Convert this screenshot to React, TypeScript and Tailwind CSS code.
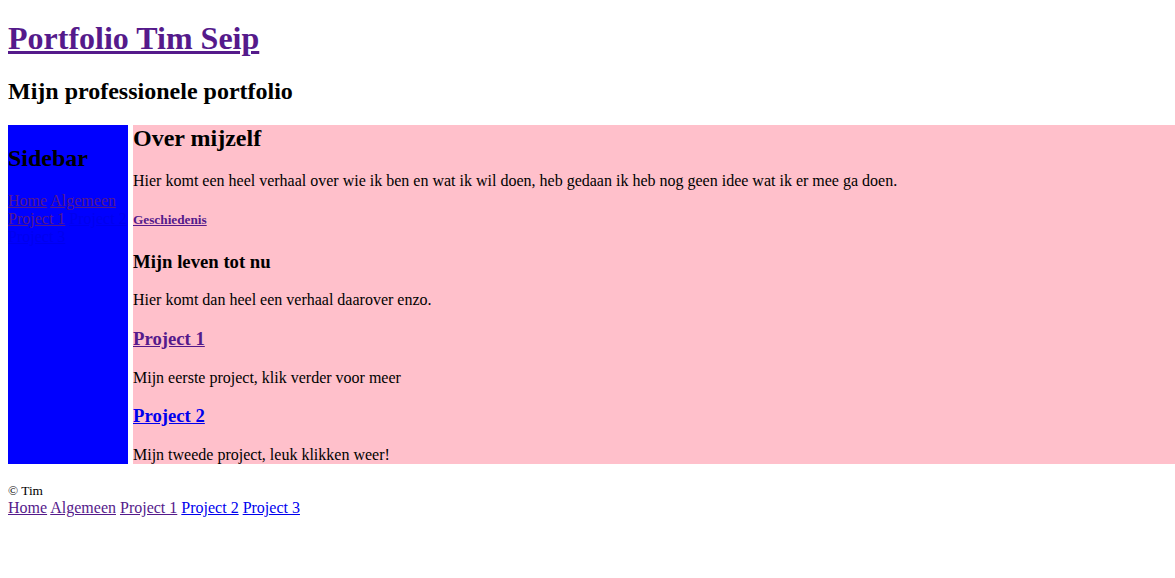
export default function App() {
  const visited = "text-[#551a8b] underline";
  const fresh = "text-[#0000ee] underline";

  return (
    <div className="font-['Liberation_Serif',serif] text-black text-base leading-[normal] px-2 pt-[20px] bg-white min-h-[578px]">
      {/* Header */}
      <header>
        <h1 className="text-[32px] font-bold">
          <a href="#" className={visited}>
            Portfolio Tim Seip
          </a>
        </h1>
        <h2 className="mt-[21.44px] text-[24px] font-bold">
          Mijn professionele portfolio
        </h2>
      </header>

      <main className="mt-[19.92px] -mr-2 flex h-[339px]">
        {/* Sidebar */}
        <aside className="w-[120px] shrink-0 bg-[#0000ff]">
          <h2 className="mt-[19.92px] text-[24px] font-bold">Sidebar</h2>
          <nav className="mt-[19.92px]">
            <a href="#" className={visited}>Home</a>{" "}
            <a href="#" className={visited}>Algemeen</a>{" "}
            <a href="#" className={visited}>Project 1</a>{" "}
            <a href="#" className={fresh}>Project 2</a>{" "}
            <a href="#" className={fresh}>Project 3</a>
          </nav>
        </aside>

        {/* Content */}
        <section className="ml-[5px] flex-1 bg-[#ffc0cb]">
          <h2 className="text-[24px] font-bold">Over mijzelf</h2>
          <p className="mt-[19.92px]">
            Hier komt een heel verhaal over wie ik ben en wat ik wil doen, heb
            gedaan ik heb nog geen idee wat ik er mee ga doen.
          </p>
          <h5 className="mt-[22.18px] text-[13.28px] font-bold">
            <a href="#" className={visited}>Geschiedenis</a>
          </h5>
          <h3 className="mt-[22.18px] text-[18.72px] font-bold">
            Mijn leven tot nu
          </h3>
          <p className="mt-[18.72px]">
            Hier komt dan heel een verhaal daarover enzo.
          </p>
          <h3 className="mt-[18.72px] text-[18.72px] font-bold">
            <a href="#" className={visited}>Project 1</a>
          </h3>
          <p className="mt-[18.72px]">Mijn eerste project, klik verder voor meer</p>
          <h3 className="mt-[18.72px] text-[18.72px] font-bold">
            <a href="#" className={fresh}>Project 2</a>
          </h3>
          <p className="mt-[18.72px]">Mijn tweede project, leuk klikken weer!</p>
        </section>
      </main>

      {/* Footer */}
      <footer className="mt-[19px]">
        <p className="text-[13.33px] font-normal">© Tim</p>
        <nav>
          <a href="#" className={visited}>Home</a>{" "}
          <a href="#" className={visited}>Algemeen</a>{" "}
          <a href="#" className={visited}>Project 1</a>{" "}
          <a href="#" className={fresh}>Project 2</a>{" "}
          <a href="#" className={fresh}>Project 3</a>
        </nav>
      </footer>
    </div>
  );
}
